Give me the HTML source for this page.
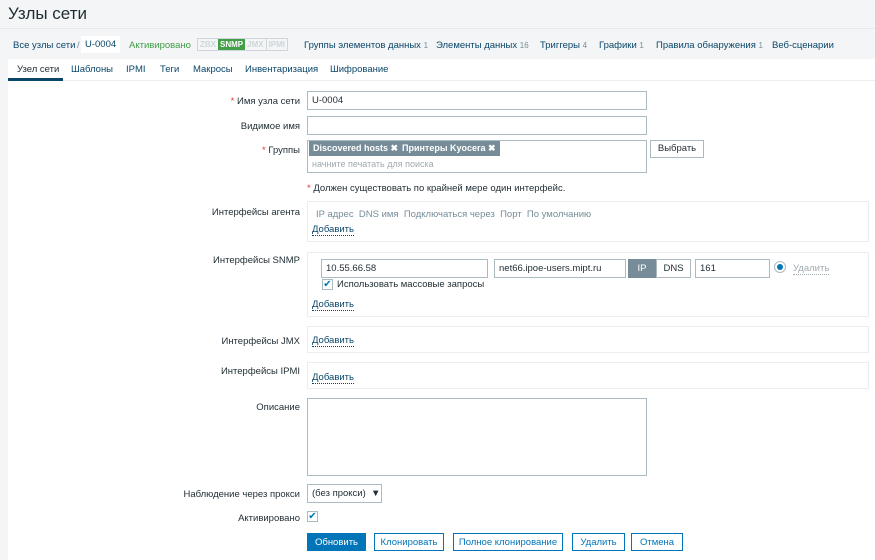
<!DOCTYPE html>
<html><head><meta charset="utf-8"><style>
*{box-sizing:border-box;margin:0;padding:0}
body{width:875px;height:560px;overflow:hidden;background:#f3f5f6;font-family:"Liberation Sans",Arial,sans-serif;font-size:9.5px;color:#1f2c33;position:relative}
.a{position:absolute;white-space:nowrap}
h1{position:absolute;left:8px;top:4px;font-weight:normal;font-size:17px;color:#1f2c33}
.sep{position:absolute;left:0;right:0;top:28px;border-top:1px solid #e6e9eb}
.lnk{color:#0a466a}
.cnt{color:#768d99;font-size:8px}
.panel{position:absolute;left:8px;top:59px;width:867px;height:501px;background:#fff}
.inp{position:absolute;border:1px solid #acbbc2;background:#fff;height:19px;padding:4px 4px;white-space:nowrap;line-height:10px}
.lbl{position:absolute;right:575px;text-align:right;white-space:nowrap}
.req{color:#e33734}
.box{position:absolute;left:307px;width:562px;border:1px solid #ebeef0}
.add{color:#0a466a;border-bottom:1px dotted #0a466a}
.btn{position:absolute;top:533px;height:18px;border:1px solid #0275b8;color:#0275b8;background:#fff;text-align:center;line-height:17px}
.tag{position:absolute;top:141px;height:15px;background:#768d99;color:#fff;font-weight:bold;padding:0 4px;line-height:14px;font-size:9px}
.cb{position:absolute;width:11px;height:11px;border:1px solid #acbbc2;background:#fff}
</style></head><body>
<h1>Узлы сети</h1>
<div class="sep"></div>
<div class="a lnk" style="left:13px;top:40px">Все узлы сети</div>
<div class="a" style="left:77px;top:40px;color:#768d99">/</div>
<div class="a" style="left:81px;top:36px;background:#fff;padding:3px 4px;color:#0a466a">U-0004</div>
<div class="a" style="left:129px;top:40px;color:#429e47">Активировано</div>
<div class="a" style="left:197px;top:38px;height:13px;border:1px solid #cfd6da;display:flex;font-size:8px;font-weight:bold;line-height:11px">
<span style="color:#cfd6da;padding:0 2px">ZBX</span><span style="background:#429e47;color:#fff;padding:0 2px">SNMP</span><span style="color:#cfd6da;padding:0 2px;border-right:1px solid #cfd6da">JMX</span><span style="color:#cfd6da;padding:0 2px">IPMI</span></div>
<div class="a lnk" style="left:304px;top:40px">Группы элементов данных <span class="cnt">1</span></div>
<div class="a lnk" style="left:436px;top:40px">Элементы данных <span class="cnt">16</span></div>
<div class="a lnk" style="left:540px;top:40px">Триггеры <span class="cnt">4</span></div>
<div class="a lnk" style="left:599px;top:40px">Графики <span class="cnt">1</span></div>
<div class="a lnk" style="left:656px;top:40px">Правила обнаружения <span class="cnt">1</span></div>
<div class="a lnk" style="left:772px;top:40px">Веб-сценарии</div>
<div class="panel"></div>
<div class="a" style="left:8px;top:80px;width:867px;border-top:1px solid #ebeef0"></div>
<div class="a" style="left:17px;top:64px">Узел сети</div>
<div class="a" style="left:8px;top:78px;width:55px;height:3px;background:#0a466a"></div>
<div class="a lnk" style="left:71px;top:64px">Шаблоны</div>
<div class="a lnk" style="left:126px;top:64px">IPMI</div>
<div class="a lnk" style="left:160px;top:64px">Теги</div>
<div class="a lnk" style="left:193px;top:64px">Макросы</div>
<div class="a lnk" style="left:245px;top:64px">Инвентаризация</div>
<div class="a lnk" style="left:330px;top:64px">Шифрование</div>

<div class="lbl" style="top:96px"><span class="req">*</span> Имя узла сети</div>
<div class="inp" style="left:307px;top:91px;width:340px">U-0004</div>
<div class="lbl" style="top:121px">Видимое имя</div>
<div class="inp" style="left:307px;top:116px;width:340px"></div>
<div class="lbl" style="top:145px"><span class="req">*</span> Группы</div>
<div class="inp" style="left:307px;top:140px;width:340px;height:33px"></div>
<div class="tag" style="left:309px">Discovered hosts ✖</div>
<div class="tag" style="left:398px">Принтеры Kyocera ✖</div>
<div class="a" style="left:312px;top:159px;color:#a0abb1;font-size:9px">начните печатать для поиска</div>
<div class="a" style="left:650px;top:140px;width:54px;height:18px;border:1px solid #acbbc2;text-align:center;line-height:16px;background:#fff">Выбрать</div>
<div class="a" style="left:307px;top:183px"><span class="req">*</span> Должен существовать по крайней мере один интерфейс.</div>

<div class="lbl" style="top:207px">Интерфейсы агента</div>
<div class="box" style="top:201px;height:41px"></div>
<div class="a" style="left:316px;top:209px;color:#768d99">IP адрес&nbsp; DNS имя&nbsp; Подключаться через&nbsp; Порт&nbsp; По умолчанию</div>
<div class="a add" style="left:312px;top:224px">Добавить</div>

<div class="lbl" style="top:255px">Интерфейсы SNMP</div>
<div class="box" style="top:252px;height:65px"></div>
<div class="inp" style="left:321px;top:259px;width:167px">10.55.66.58</div>
<div class="inp" style="left:494px;top:259px;width:132px">net66.ipoe-users.mipt.ru</div>
<div class="a" style="left:628px;top:259px;width:28px;height:19px;background:#768d99;color:#fff;text-align:center;line-height:17px;border:1px solid #768d99">IP</div>
<div class="a" style="left:656px;top:259px;width:35px;height:19px;border:1px solid #acbbc2;text-align:center;line-height:17px">DNS</div>
<div class="inp" style="left:695px;top:259px;width:75px">161</div>
<div class="a" style="left:774px;top:261px;width:12px;height:12px;border:1px solid #acbbc2;border-radius:50%;background:#fff"><div style="margin:2px;width:6px;height:6px;border-radius:50%;background:#0275b8"></div></div>
<div class="a" style="left:793px;top:263px;color:#a0abb1;border-bottom:1px dotted #a0abb1">Удалить</div>
<div class="cb" style="left:322px;top:279px;color:#0275b8;font-size:10px;line-height:9px;text-align:center">✔</div>
<div class="a" style="left:337px;top:279px">Использовать массовые запросы</div>
<div class="a add" style="left:312px;top:299px">Добавить</div>

<div class="lbl" style="top:336px">Интерфейсы JMX</div>
<div class="box" style="top:326px;height:27px"></div>
<div class="a add" style="left:312px;top:335px">Добавить</div>
<div class="lbl" style="top:366px">Интерфейсы IPMI</div>
<div class="box" style="top:362px;height:27px"></div>
<div class="a add" style="left:312px;top:372px">Добавить</div>

<div class="lbl" style="top:402px">Описание</div>
<div class="inp" style="left:307px;top:398px;width:340px;height:78px"></div>
<div class="lbl" style="top:489px">Наблюдение через прокси</div>
<div class="inp" style="left:307px;top:484px;width:75px">(без прокси)&nbsp; ▼</div>
<div class="lbl" style="top:513px">Активировано</div>
<div class="cb" style="left:307px;top:511px;color:#0275b8;font-size:10px;line-height:9px;text-align:center">✔</div>

<div class="btn" style="left:307px;width:59px;background:#0275b8;color:#fff">Обновить</div>
<div class="btn" style="left:374px;width:70px">Клонировать</div>
<div class="btn" style="left:453px;width:110px">Полное клонирование</div>
<div class="btn" style="left:572px;width:53px">Удалить</div>
<div class="btn" style="left:631px;width:52px">Отмена</div>
</body></html>
